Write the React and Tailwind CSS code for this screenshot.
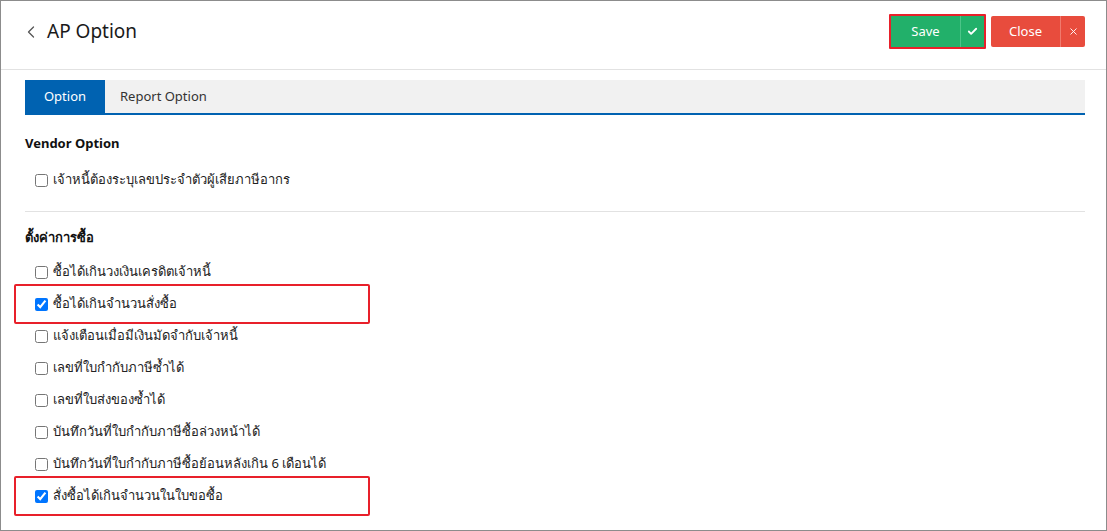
import { ChevronLeft, Check, X } from 'lucide-react'

const vendorOptions = [{ label: 'เจ้าหนี้ต้องระบุเลขประจำตัวผู้เสียภาษีอากร', checked: false }]

const purchaseOptions = [
  { label: 'ซื้อได้เกินวงเงินเครดิตเจ้าหนี้', checked: false },
  { label: 'ซื้อได้เกินจำนวนสั่งซื้อ', checked: true, mark: true },
  { label: 'แจ้งเตือนเมื่อมีเงินมัดจำกับเจ้าหนี้', checked: false },
  { label: 'เลขที่ใบกำกับภาษีซ้ำได้', checked: false },
  { label: 'เลขที่ใบส่งของซ้ำได้', checked: false },
  { label: 'บันทึกวันที่ใบกำกับภาษีซื้อล่วงหน้าได้', checked: false },
  { label: 'บันทึกวันที่ใบกำกับภาษีซื้อย้อนหลังเกิน 6 เดือนได้', checked: false },
  { label: 'สั่งซื้อได้เกินจำนวนในใบขอซื้อ', checked: true, mark: true },
]

function OptionRow({ label, checked, mark }) {
  return (
    <div className="relative flex h-[32px] items-center gap-[5px] pl-[10px]">
      {mark ? (
        <div className="pointer-events-none absolute -left-[11px] top-[-4px] h-[40px] w-[356px] rounded-[2px] border-2 border-[#e8202a]" />
      ) : null}
      <input
        type="checkbox"
        defaultChecked={checked}
        className="m-0 h-[13px] w-[13px] accent-[#0075ff]"
      />
      <span className="text-[13px] text-[#222]">{label}</span>
    </div>
  )
}

export default function App() {
  return (
    <div
      className="h-[531px] w-[1107px] overflow-hidden border border-[#8c8c8c] bg-white"
      style={{ fontFamily: '"Noto Sans", "Liberation Sans", sans-serif' }}
    >
      <header className="flex h-[69px] items-center justify-between border-b border-[#e2e2e2] pb-[7px] pl-[20px] pr-[21px]">
        <div className="flex items-center gap-[6px]">
          <ChevronLeft className="h-[20px] w-[20px] text-[#555]" strokeWidth={1.5} />
          <h1 className="text-[19px] text-[#1a1a1a]">AP Option</h1>
        </div>
        <div className="flex items-center gap-[5px]">
          <div className="rounded-[1px] p-[2px] ring-2 ring-inset ring-[#e8202a]">
            <div className="flex h-[31px] bg-[#22b06a] text-white">
              <span className="flex w-[69px] items-center justify-center text-[13px]">Save</span>
              <span className="flex w-[24px] items-center justify-center border-l border-[#4cc488]">
                <Check className="h-[11px] w-[11px]" strokeWidth={4} />
              </span>
            </div>
          </div>
          <div className="flex h-[31px] rounded-[2px] bg-[#e84c3d] text-white">
            <span className="flex w-[69px] items-center justify-center text-[13px]">Close</span>
            <span className="flex w-[25px] items-center justify-center border-l border-[#f07a6e]">
              <X className="h-[11px] w-[11px]" strokeWidth={2} />
            </span>
          </div>
        </div>
      </header>

      <main className="pl-[24px] pr-[21px] pt-[10px]">
        <div className="flex h-[35px] border-b-2 border-[#0062b1] bg-[#f1f1f1] text-[13px]">
          <div className="flex w-[80px] items-center justify-center bg-[#0062b1] text-white">Option</div>
          <div className="flex items-center px-[15px] text-[#333]">Report Option</div>
        </div>

        <section className="mt-[13px]">
          <h2 className="flex h-[32px] items-center text-[13px] font-bold text-[#111]">Vendor Option</h2>
          <div className="mt-[4px]">
            {vendorOptions.map((o) => (
              <OptionRow key={o.label} {...o} />
            ))}
          </div>
        </section>

        <hr className="mt-[15px] border-[#e2e2e2]" />

        <section className="mt-[10px]">
          <h2 className="flex h-[32px] items-center text-[13px] font-bold text-[#111]">ตั้งค่าการซื้อ</h2>
          <div className="mt-[2px]">
            {purchaseOptions.map((o) => (
              <OptionRow key={o.label} {...o} />
            ))}
          </div>
        </section>
      </main>
    </div>
  )
}
